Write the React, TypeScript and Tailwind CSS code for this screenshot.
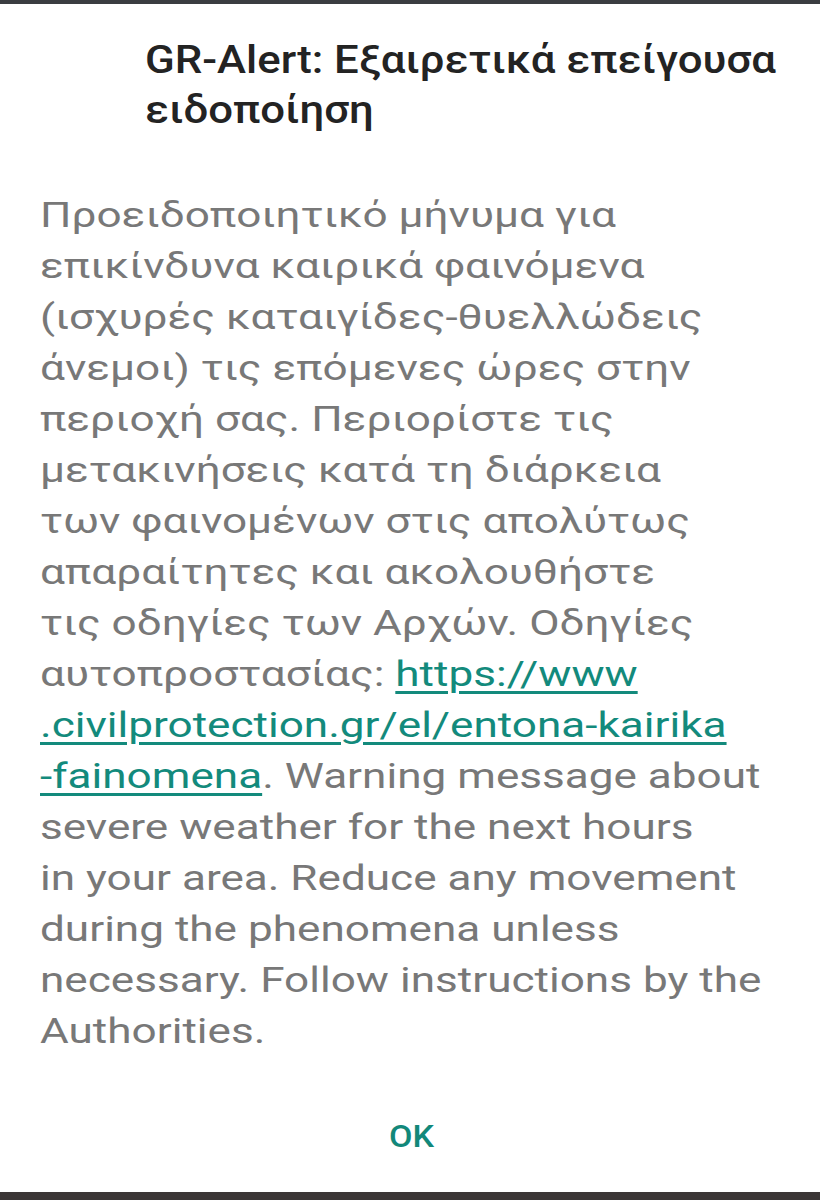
import React from "react";

const linkCls = "text-[#138a7c] underline decoration-[3px] underline-offset-[5px]";

const bodyLines: React.ReactNode[] = [
  "Προειδοποιητικό μήνυμα για",
  "επικίνδυνα καιρικά φαινόμενα",
  "(ισχυρές καταιγίδες-θυελλώδεις",
  "άνεμοι) τις επόμενες ώρες στην",
  "περιοχή σας. Περιορίστε τις",
  "μετακινήσεις κατά τη διάρκεια",
  "των φαινομένων στις απολύτως",
  "απαραίτητες και ακολουθήστε",
  "τις οδηγίες των Αρχών. Οδηγίες",
  <>
    αυτοπροστασίας: <span className={linkCls}>https://www</span>
  </>,
  <span className={linkCls}>.civilprotection.gr/el/entona-kairika</span>,
  <>
    <span className={linkCls}>-fainomena</span>. Warning message about
  </>,
  "severe weather for the next hours",
  "in your area. Reduce any movement",
  "during the phenomena unless",
  "necessary. Follow instructions by the",
  "Authorities.",
];

export default function App() {
  return (
    <div className="w-[820px] h-[1200px] flex flex-col bg-white overflow-hidden" style={{ fontFamily: "Roboto, 'Noto Sans', sans-serif" }}>
      <div className="h-[4px] bg-[#3a3d41] shrink-0" />
      <div className="flex-1 flex flex-col bg-white">
        <div className="pt-[31px] pl-[145px]">
          <div className="text-[38px] leading-[50px] font-medium text-[#232323] origin-top-left scale-x-[1.15]">
            <div className="whitespace-nowrap">GR-Alert: Εξαιρετικά επείγουσα</div>
            <div className="whitespace-nowrap">ειδοποίηση</div>
          </div>
        </div>
        <div className="mt-[55px] pl-[40px]">
          <div className="text-[35px] leading-[51px] text-[#787878] origin-top-left scale-x-[1.26]">
            {bodyLines.map((l, i) => (
              <div key={i} className="whitespace-nowrap">{l}</div>
            ))}
          </div>
        </div>
        <div className="flex-1" />
        <div className="flex justify-center pb-[32px]">
          <span className="text-[31px] font-medium text-[#12887a] pl-[2px] scale-x-[1.1]">OK</span>
        </div>
      </div>
      <div className="h-[8px] bg-[#3b3636] shrink-0" />
    </div>
  );
}
